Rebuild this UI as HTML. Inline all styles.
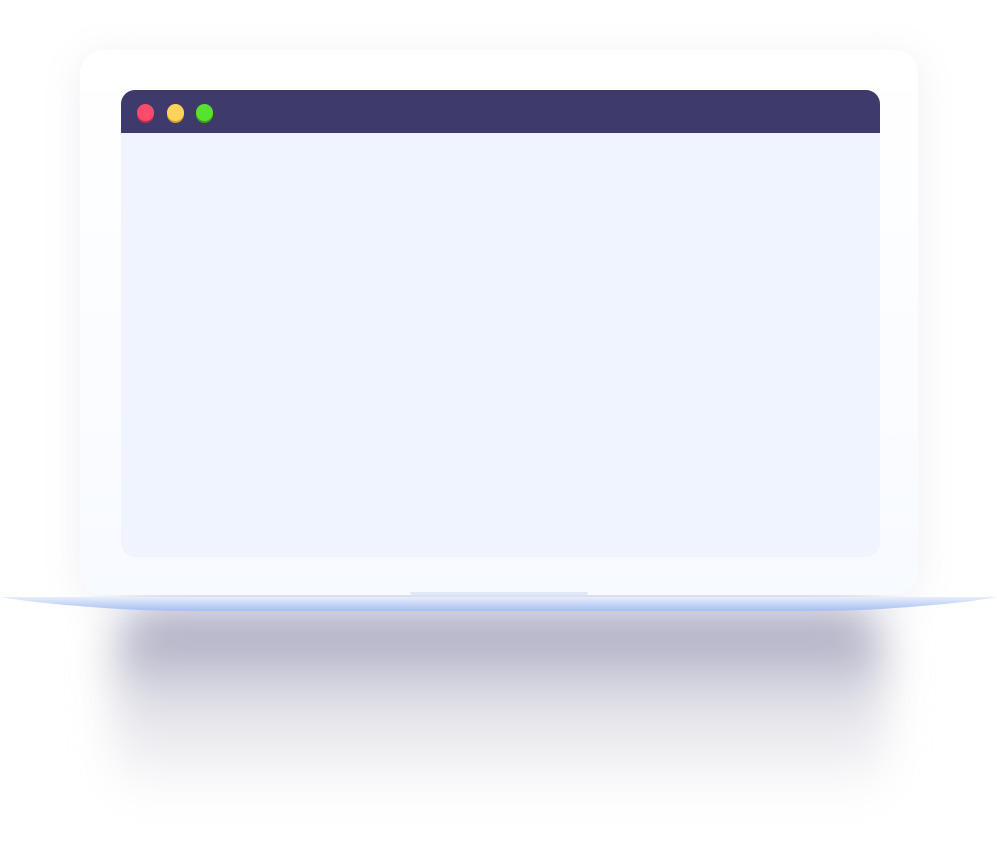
<!DOCTYPE html>
<html><head><style>
html,body{margin:0;padding:0;background:#fff;width:997px;height:851px;overflow:hidden;position:relative}
.sh{position:absolute;left:115px;top:610px;width:770px;height:190px;background:linear-gradient(#9a9ab5,rgba(190,190,205,.5) 45%,rgba(255,255,255,0));filter:blur(22px);border-radius:40px}
.body{position:absolute;left:80px;top:50px;width:838px;height:545px;border-radius:24px;background:linear-gradient(#fff,#f7faff);box-shadow:0 6px 40px rgba(120,120,170,.12)}
.scr{position:absolute;left:121px;top:90px;width:759px;height:467px;border-radius:14px;background:#eff4fe;overflow:hidden}
.bar{height:43px;background:#3e3a6b}
.d{position:absolute;top:14px;width:17px;height:17px;border-radius:50%}
</style></head><body>
<div class="sh"></div>
<div class="body"></div>
<div class="scr"><div class="bar"></div>
<div class="d" style="left:16px;background:#ff4b6b;box-shadow:0 2px 0 #c9294c"></div>
<div class="d" style="left:46px;background:#ffd25c;box-shadow:0 2px 0 #d1a232"></div>
<div class="d" style="left:75px;background:#56e22e;box-shadow:0 2px 0 #37a81b"></div>
</div>
<svg style="position:absolute;left:0;top:590px" width="997" height="30">
<defs><linearGradient id="g" x1="0" y1="0" x2="0" y2="1"><stop offset="0" stop-color="#e6eefc"/><stop offset="1" stop-color="#a6bef2"/></linearGradient></defs>
<path d="M0 7 L997 7 Q960 14 880 19 Q850 21 800 21 L200 21 Q150 21 120 19 Q40 14 0 7Z" fill="url(#g)"/>
<path d="M410 2 L588 2 Q588 5 585 5 L413 5 Q410 5 410 2Z" fill="#dfe8fa"/>
</svg>
</body></html>
